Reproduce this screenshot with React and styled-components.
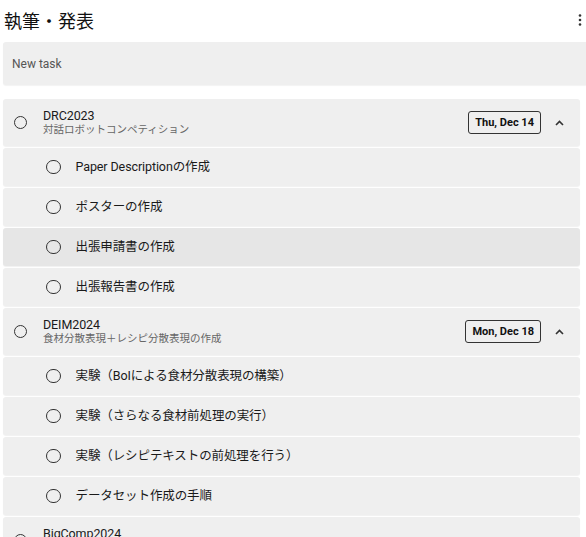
import React from 'react'
import styled, { createGlobalStyle } from 'styled-components'

const Global = createGlobalStyle`
  body {
    margin: 0;
    background: #fff;
    font-family: Roboto, "Noto Sans CJK JP", sans-serif;
    color: #222;
  }
`

const Page = styled.div`
  width: 586px;
  height: 537px;
  overflow: hidden;
  padding-left: 3px;
  box-sizing: border-box;
`

const Header = styled.div`
  height: 42px;
  display: flex;
  align-items: center;
  justify-content: space-between;
  padding-right: 4px;
`

const Title = styled.h1`
  margin: 0 0 2px 1px;
  font-size: 18px;
  font-weight: 400;
  color: #111;
`

const Kebab = styled.svg`
  width: 4px;
  height: 12px;
  margin-top: -2px;
`

const NewTask = styled.div`
  height: 43px;
  background: #efefef;
  border-radius: 3px 0 0 3px;
  display: flex;
  align-items: center;
  padding-left: 9px;
  font-size: 12px;
  color: #555;
  box-shadow: 0 1px 1px rgba(0, 0, 0, 0.05);
`

const List = styled.div`
  margin-top: 14px;
  margin-right: 6px;
  display: flex;
  flex-direction: column;
  gap: 2px;
`

const Card = styled.div`
  display: flex;
  align-items: center;
  height: ${p => (p.$parent ? '47px' : '38px')};
  background: ${p => (p.$active ? '#e6e6e6' : '#efefef')};
  border-radius: 3px;
  box-shadow: 0 1px 1px rgba(0, 0, 0, 0.06);
  padding-left: ${p => (p.$parent ? '11px' : '43px')};
  padding-right: 16px;
  flex-shrink: 0;
`

const Circle = styled.span`
  width: ${p => (p.$parent ? '11px' : '12.5px')};
  height: ${p => (p.$parent ? '11px' : '12.5px')};
  border: 1.8px solid #333;
  border-radius: 50%;
  flex-shrink: 0;
`

const Texts = styled.div`
  margin-left: ${p => (p.$parent ? '16px' : '15px')};
  flex: 1;
  display: flex;
  flex-direction: column;
`

const Name = styled.div`
  font-size: 12.5px;
  letter-spacing: -0.1px;
  color: #1a1a1a;
  line-height: ${p => (p.$parent ? '15px' : '16px')};
`

const Sub = styled.div`
  font-size: 10.5px;
  color: #666;
  line-height: 14px;
  min-height: 14px;
`

const DateChip = styled.span`
  border: 1px solid #333;
  border-radius: 3px;
  font-size: 11px;
  font-weight: 700;
  color: #111;
  padding: 4px 6px;
  line-height: 13px;
  margin-right: 14px;
`

const Chevron = styled.svg`
  width: 9px;
  height: 6px;
`

const ChevronUp = () => (
  <Chevron viewBox="0 0 9 6">
    <polyline points="1,5 4.5,1.5 8,5" fill="none" stroke="#333" strokeWidth="1.6" />
  </Chevron>
)

const groups = [
  {
    name: 'DRC2023',
    sub: '対話ロボットコンペティション',
    date: 'Thu, Dec 14',
    tasks: ['Paper Descriptionの作成', 'ポスターの作成', '出張申請書の作成', '出張報告書の作成'],
    active: 2,
  },
  {
    name: 'DEIM2024',
    sub: '食材分散表現＋レシピ分散表現の作成',
    date: 'Mon, Dec 18',
    tasks: [
      '実験（BoIによる食材分散表現の構築）',
      '実験（さらなる食材前処理の実行）',
      '実験（レシピテキストの前処理を行う）',
      'データセット作成の手順',
    ],
  },
  {
    name: 'BigComp2024',
    sub: '',
    date: '',
    tasks: [],
  },
]

export default function App() {
  return (
    <Page>
      <Global />
      <Header>
        <Title>執筆・発表</Title>
        <Kebab viewBox="0 0 4 12">
          <circle cx="2" cy="1.5" r="1.3" fill="#333" />
          <circle cx="2" cy="6" r="1.3" fill="#333" />
          <circle cx="2" cy="10.5" r="1.3" fill="#333" />
        </Kebab>
      </Header>
      <NewTask>New task</NewTask>
      <List>
        {groups.map(g => (
          <React.Fragment key={g.name}>
            <Card $parent>
              <Circle $parent />
              <Texts $parent>
                <Name $parent>{g.name}</Name>
                <Sub>{g.sub}</Sub>
              </Texts>
              {g.date && <DateChip>{g.date}</DateChip>}
              {g.date && <ChevronUp />}
            </Card>
            {g.tasks.map((t, i) => (
              <Card key={t} $active={g.active === i}>
                <Circle />
                <Texts>
                  <Name>{t}</Name>
                </Texts>
              </Card>
            ))}
          </React.Fragment>
        ))}
      </List>
    </Page>
  )
}
